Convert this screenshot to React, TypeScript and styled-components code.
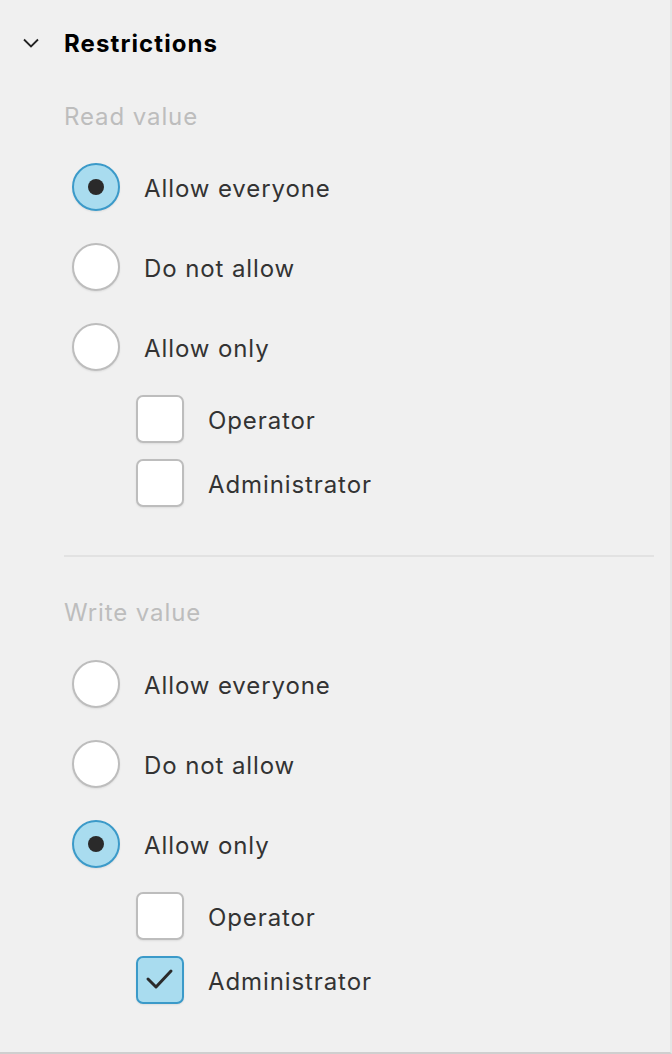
import React from "react";
import styled, { createGlobalStyle } from "styled-components";

const Global = createGlobalStyle`
  html, body { margin: 0; padding: 0; background: #f0f0f0; }
  * { box-sizing: border-box; }
`;

const Panel = styled.div`
  width: 672px;
  height: 1054px;
  background: #f0f0f0;
  border-right: 2px solid #e5e5e5;
  border-bottom: 2px solid #cfcfcf;
  font-family: Inter, "Noto Sans", sans-serif;
  color: #333;
  display: flex;
  flex-direction: column;
`;

const Header = styled.div`
  height: 86px;
  display: flex;
  align-items: center;
  padding-left: 23px;
  gap: 25px;
`;

const Title = styled.div`
  font-size: 24px;
  font-weight: 700;
  color: #000;
  letter-spacing: 1.1px;
`;

const Body = styled.div`
  padding-left: 64px;
  padding-right: 16px;
  display: flex;
  flex-direction: column;
`;

const SectionLabel = styled.div<{ $top: number }>`
  margin-top: ${(p) => p.$top}px;
  padding-top: 1px;
  height: 32px;
  line-height: 32px;
  font-size: 24px;
  letter-spacing: 0.9px;
  color: #bdbdbd;
`;

const Options = styled.div<{ $top: number }>`
  margin-top: ${(p) => p.$top}px;
  display: flex;
  flex-direction: column;
`;

const RadioRow = styled.div`
  height: 80px;
  display: flex;
  align-items: center;
  padding-left: 8px;
  gap: 24px;
`;

const CheckRow = styled.div`
  height: 64px;
  display: flex;
  align-items: center;
  padding-left: 72px;
  gap: 24px;
`;

const Label = styled.span`
  font-size: 24px;
  letter-spacing: 0.9px;
  color: #333;
  line-height: 32px;
  padding-top: 3px;
`;

const RadioCircle = styled.div<{ $on: boolean }>`
  width: 48px;
  height: 48px;
  border-radius: 50%;
  border: 2px solid ${(p) => (p.$on ? "#3b9ac9" : "#bdbdbd")};
  background: ${(p) => (p.$on ? "#a9dcef" : "#ffffff")};
  box-shadow: 0 1px 2px rgba(0, 0, 0, 0.08);
  display: flex;
  align-items: center;
  justify-content: center;
`;

const Dot = styled.div`
  width: 16px;
  height: 16px;
  border-radius: 50%;
  background: #2a2a2a;
`;

const CheckBox = styled.div<{ $on: boolean }>`
  width: 48px;
  height: 48px;
  border-radius: 7px;
  border: 2px solid ${(p) => (p.$on ? "#3b9ac9" : "#bdbdbd")};
  background: ${(p) => (p.$on ? "#a9dcef" : "#ffffff")};
  box-shadow: 0 1px 2px rgba(0, 0, 0, 0.08);
  display: flex;
  align-items: center;
  justify-content: center;
`;

const Divider = styled.div`
  margin-top: 40px;
  height: 2px;
  background: #e2e2e2;
`;

const Radio = ({ on, label }: { on: boolean; label: string }) => (
  <RadioRow>
    <RadioCircle $on={on}>{on && <Dot />}</RadioCircle>
    <Label>{label}</Label>
  </RadioRow>
);

const Check = ({ on, label }: { on: boolean; label: string }) => (
  <CheckRow>
    <CheckBox $on={on}>
      {on && (
        <svg width="44" height="44" viewBox="0 0 44 44">
          <polyline
            points="10,21 18,29 33,13"
            fill="none"
            stroke="#2a2a2a"
            strokeWidth="3"
            strokeLinecap="round"
            strokeLinejoin="round"
          />
        </svg>
      )}
    </CheckBox>
    <Label>{label}</Label>
  </CheckRow>
);

export default function App() {
  return (
    <>
      <Global />
      <Panel>
        <Header>
          <svg width="16" height="10" viewBox="0 0 16 10">
            <polyline
              points="1,1.5 8,8.5 15,1.5"
              fill="none"
              stroke="#222"
              strokeWidth="1.8"
            />
          </svg>
          <Title>Restrictions</Title>
        </Header>
        <Body>
          <SectionLabel $top={14}>Read value</SectionLabel>
          <Options $top={15}>
            <Radio on label="Allow everyone" />
            <Radio on={false} label="Do not allow" />
            <Radio on={false} label="Allow only" />
            <Check on={false} label="Operator" />
            <Check on={false} label="Administrator" />
          </Options>
          <Divider />
          <SectionLabel $top={39}>Write value</SectionLabel>
          <Options $top={16}>
            <Radio on={false} label="Allow everyone" />
            <Radio on={false} label="Do not allow" />
            <Radio on label="Allow only" />
            <Check on={false} label="Operator" />
            <Check on label="Administrator" />
          </Options>
        </Body>
      </Panel>
    </>
  );
}
